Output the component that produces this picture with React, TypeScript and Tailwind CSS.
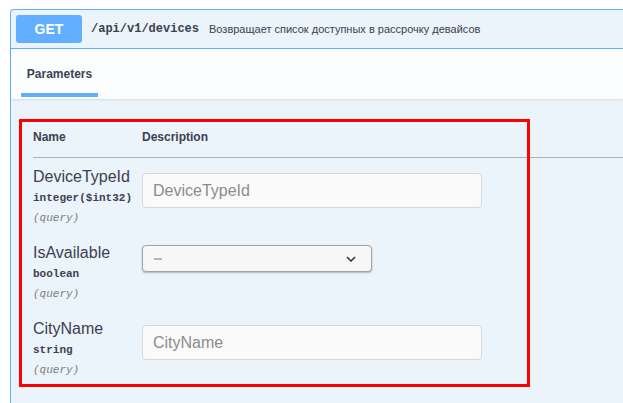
const sans = "font-['Liberation_Sans',Arial,sans-serif]";
const mono = "font-['Liberation_Mono','DejaVu_Sans_Mono',monospace]";

type Param = {
  name: string;
  type: string;
  kind: "input" | "select";
};

const params: Param[] = [
  { name: "DeviceTypeId", type: "integer($int32)", kind: "input" },
  { name: "IsAvailable", type: "boolean", kind: "select" },
  { name: "CityName", type: "string", kind: "input" },
];

function ParamRow({ p }: { p: Param }) {
  return (
    <div className="flex pt-[9px] pb-[6px]">
      <div className="w-[109px] shrink-0">
        <div className="h-[20px] text-[16px] leading-[20px] text-[#3b4151]">{p.name}</div>
        <div className={`mt-[1px] h-[20px] text-[11px] font-bold leading-[20px] text-[#3b4151] ${mono}`}>
          {p.type}
        </div>
        <div className={`h-[20px] text-[11px] italic leading-[20px] text-[#7d7d7d] ${mono}`}>(query)</div>
      </div>
      {p.kind === "input" ? (
        <div className="mt-[6px] flex h-[35px] w-[340px] items-center rounded-[4px] border border-[#d9d9d9] bg-[#fafafa] pl-[10px] text-[16px] text-[#8c8c8c]">
          {p.name}
        </div>
      ) : (
        <div className="mt-[2px] flex h-[27px] w-[230px] items-center justify-between rounded-[4px] border border-[#a3a3a3] bg-[#f7f7f7] pl-[11px] pr-[15px] shadow-[0_1px_2px_rgba(0,0,0,0.25)]">
          <span className="h-[2px] w-[8px] bg-[#b5b5b5]" />
          <svg width="10" height="6" viewBox="0 0 10 6" fill="none">
            <path d="M1 1l4 4 4-4" stroke="#333" strokeWidth="1.5" />
          </svg>
        </div>
      )}
    </div>
  );
}

export default function App() {
  return (
    <div className={`h-[403px] w-[623px] overflow-hidden bg-white ${sans} text-[#3b4151]`}>
      <div className="pl-[10px] pt-[9px]">
        <div className="relative h-[394px] rounded-tl-[4px] border-l border-t border-[#61affe] bg-[#ebf3fb]">
          <div className="flex h-[39px] items-center border-b border-[#61affe] pl-[5px]">
            <div className="flex h-[28px] w-[66px] items-center justify-center rounded-[3px] bg-[#61affe] text-[14px] font-bold text-white">
              GET
            </div>
            <span className={`ml-[9px] text-[12px] font-bold text-[#3b4151] ${mono}`}>/api/v1/devices</span>
            <span className="ml-[10px] text-[11px] text-[#3b4151]">
              Возвращает список доступных в рассрочку девайсов
            </span>
          </div>

          <div className="flex h-[50px] items-end bg-[#fbfdff] pl-[10px] shadow-[0_1px_2px_rgba(0,0,0,0.1)]">
            <div className="mb-[2px] flex w-[77px] flex-col items-center">
              <div className="h-[20px] text-[12px] font-bold leading-[20px] text-[#3b4151]">Parameters</div>
              <div className="mt-[9px] h-[4px] w-full bg-[#61affe]" />
            </div>
          </div>

          <div className="pl-[22px]">
            <div className="flex border-b border-[#a9b1b9] pt-[30px] pb-[12px] text-[12px] font-bold leading-[16px] text-[#3b4151]">
              <div className="w-[109px]">Name</div>
              <div>Description</div>
            </div>
            {params.map((p) => (
              <ParamRow key={p.name} p={p} />
            ))}
          </div>

          <div className="absolute left-[8px] top-[109px] h-[268px] w-[511px] border-[3px] border-[#ff0000]" />
        </div>
      </div>
    </div>
  );
}
